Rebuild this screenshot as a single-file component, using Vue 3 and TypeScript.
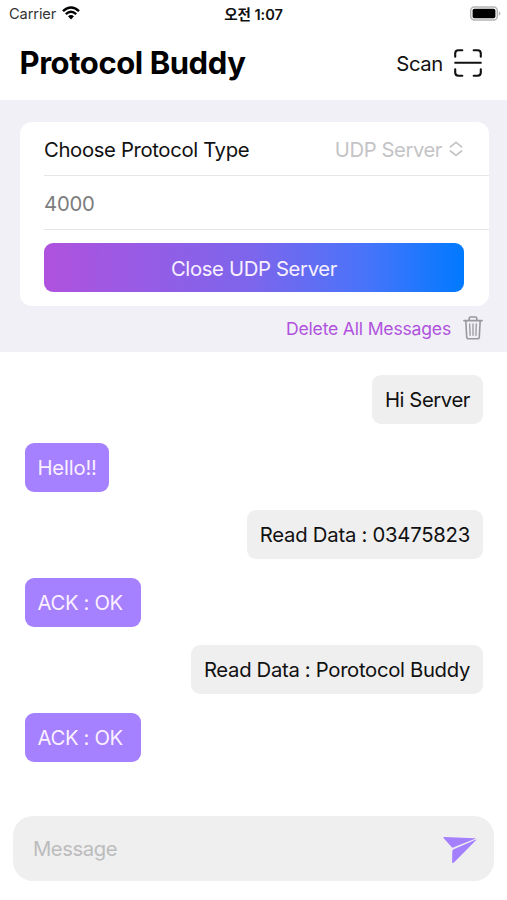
<script setup lang="ts">
import { ref } from 'vue'

interface ChatMessage {
  id: number
  text: string
  side: 'sent' | 'received'
  tracking?: number
}

const protocolType = ref('UDP Server')
const port = ref('')
const draft = ref('')
const messages = ref<ChatMessage[]>([
  { id: 1, text: 'Hi Server', side: 'sent', tracking: -0.43 },
  { id: 2, text: 'Hello!!', side: 'received', tracking: -0.2 },
  { id: 3, text: 'Read Data : 03475823', side: 'sent', tracking: -0.25 },
  { id: 4, text: 'ACK : OK ', side: 'received', tracking: -0.35 },
  { id: 5, text: 'Read Data : Porotocol Buddy', side: 'sent', tracking: -0.32 },
  { id: 6, text: 'ACK : OK ', side: 'received', tracking: -0.35 },
])

function clearMessages() {
  messages.value = []
}

function send() {
  const text = draft.value.trim()
  if (!text) return
  messages.value.push({ id: Date.now(), text, side: 'sent' })
  draft.value = ''
}
</script>

<template>
  <main class="screen">
    <div class="status">
      <div class="carrier">
        <span>Carrier</span>
        <svg class="wifi" viewBox="0 0 18 14" width="18" height="14">
          <path d="M1 5.1Q9-2.2 17 5.1" fill="none" stroke="#000" stroke-width="2.5" />
          <path d="M3.8 8.1Q9 3.4 14.2 8.1" fill="none" stroke="#000" stroke-width="2.3" />
          <path d="M6 10.3Q9 7.8 12 10.3L9 13.4Z" fill="#000" />
        </svg>
      </div>
      <time class="clock">오전 1:07</time>
      <svg class="battery" viewBox="0 0 32 15" width="32" height="15">
        <rect x="1.7" y="1" width="26.6" height="13" rx="3.8" fill="#fff" stroke="#b4b4b4" stroke-width="1.5" />
        <rect x="3.6" y="2.8" width="22.8" height="9.4" rx="1.8" fill="#000" />
        <path d="M29.8 5.3Q31.4 6 31.4 7.5T29.8 9.7Z" fill="#b4b4b4" />
      </svg>
    </div>

    <header class="header">
      <h1>Protocol Buddy</h1>
      <button class="scan">
        <span>Scan</span>
        <svg viewBox="0 0 28 28" width="28" height="28" fill="none" stroke="#111" stroke-width="2.1" stroke-linecap="round">
          <path d="M1.2 7.8V4.4Q1.2 1.2 4.4 1.2H8.3M19.7 1.2H23.6Q26.8 1.2 26.8 4.4V7.8M1.2 20.2V23.6Q1.2 26.8 4.4 26.8H8.3M19.7 26.8H23.6Q26.8 26.8 26.8 23.6V20.2M1.2 13.8H26.8" />
        </svg>
      </button>
    </header>

    <section class="settings">
      <div class="card">
        <div class="row">
          <span class="label">Choose Protocol Type</span>
          <button class="picker">
            <span>{{ protocolType }}</span>
            <svg viewBox="0 0 14 16" width="14" height="16" fill="none" stroke="#c4c4c6" stroke-width="1.7" stroke-linecap="round" stroke-linejoin="round">
              <path d="M1.4 5.8L7 1.4L12.6 5.8M1.4 10L7 14.4L12.6 10" />
            </svg>
          </button>
        </div>
        <div class="row">
          <input v-model="port" class="port" placeholder="4000" />
        </div>
        <button class="toggle">Close UDP Server</button>
      </div>
      <button class="delete" @click="clearMessages">
        <span>Delete All Messages</span>
        <svg viewBox="0 0 20 24" width="20" height="24" fill="none" stroke="#98989d" stroke-width="1.6" stroke-linecap="round" stroke-linejoin="round">
          <path d="M.9 4.6H19.1M6.2 4.4V2.5Q6.2 1 7.7 1H12.3Q13.8 1 13.8 2.5V4.4M2.8 4.8L3.7 21Q3.8 22.8 5.6 22.8H14.4Q16.2 22.8 16.3 21L17.2 4.8" />
          <path d="M6.7 8L7.1 19.3M10 8V19.3M13.3 8L12.9 19.3" stroke-width="1.3" />
        </svg>
      </button>
    </section>

    <section class="chat">
      <p
        v-for="m in messages"
        :key="m.id"
        class="bubble"
        :class="m.side"
        :style="{ letterSpacing: `${m.tracking ?? -0.3}px` }"
      >{{ m.text }}</p>
    </section>

    <form class="composer" @submit.prevent="send">
      <input v-model="draft" placeholder="Message" />
      <button class="send" aria-label="Send">
        <svg viewBox="0 0 34 27" width="34" height="27" fill="#a480ff">
          <path d="M.5.9Q.2 0 1.2 0L32.2 1.2Q33 1.3 32.2 1.7L10.2 10.6Q9.4 10.9 8.8 10.2Z" />
          <path d="M33 2.6Q33.6 2.3 33.2 3L11 25.6Q9.4 26.8 9.1 25L9.3 14.3Q9.3 12.9 10.7 12.2Z" />
        </svg>
      </button>
    </form>
  </main>
</template>

<style>
body {
  background: #fff;
}
</style>

<style scoped>
.screen {
  width: 507px;
  height: 900px;
  box-sizing: border-box;
  display: flex;
  flex-direction: column;
  overflow: hidden;
  background: #fff;
  color: #111;
  font-family: Inter, "Noto Sans CJK KR", sans-serif;
  font-size: 20.3px;
  letter-spacing: -0.35px;
}

button,
input {
  border: 0;
  padding: 0;
  margin: 0;
  background: none;
  font: inherit;
  letter-spacing: inherit;
  color: inherit;
  outline: none;
}

svg {
  display: block;
  flex: none;
}

.status {
  height: 27px;
  display: grid;
  grid-template-columns: 1fr auto 1fr;
  align-items: center;
  padding: 0 6px 0 9px;
  font-size: 14.6px;
  letter-spacing: 0;
}

.carrier {
  display: flex;
  align-items: center;
  gap: 6px;
  letter-spacing: -0.1px;
  color: #333;
}

.wifi {
  margin-top: -2px;
}

.clock {
  margin-right: 3px;
  font-size: 14.6px;
  font-weight: 600;
  letter-spacing: -0.1px;
}

.battery {
  justify-self: end;
}

.header {
  height: 73px;
  display: flex;
  align-items: center;
  justify-content: space-between;
  padding: 0 25px 0 19.5px;
  box-sizing: border-box;
}

h1 {
  margin: -2px 0 0;
  font-size: 31px;
  font-weight: 700;
  letter-spacing: -0.43px;
  color: #000;
}

.scan {
  display: flex;
  align-items: center;
  gap: 11px;
}

.scan svg {
  margin-top: -2px;
}

.settings {
  height: 252px;
  box-sizing: border-box;
  padding: 22px 18px 0 20px;
  background: #f0f0f6;
  display: flex;
  flex-direction: column;
}

.card {
  height: 184px;
  box-sizing: border-box;
  padding-left: 24px;
  border-radius: 12px;
  background: #fff;
}

.row {
  height: 54px;
  box-sizing: border-box;
  display: flex;
  align-items: center;
  justify-content: space-between;
  padding: 2px 26px 0 0;
  border-bottom: 1px solid #e6e6e8;
}

.picker {
  display: flex;
  align-items: center;
  gap: 7px;
  letter-spacing: -0.45px;
  color: #c4c4c6;
}

.picker svg {
  margin-top: -1px;
}

.port {
  width: 100%;
  letter-spacing: -0.2px;
}

.port::placeholder {
  color: #7c7c7e;
  opacity: 1;
}

.toggle {
  display: block;
  width: 420px;
  height: 49px;
  padding-top: 1px;
  margin-top: 13px;
  border-radius: 9px;
  background: linear-gradient(90deg, #af52de, #7c66ec 50%, #4774fa 77%, #007aff);
  color: #f8f0ff;
}

.delete {
  display: flex;
  align-items: center;
  align-self: flex-end;
  gap: 12px;
  height: 44px;
  margin-right: 6px;
  font-size: 17.6px;
  letter-spacing: -0.2px;
  color: #b052de;
}

.chat {
  flex: 1;
  display: flex;
  flex-direction: column;
  gap: 18.6px;
  padding: 23px 24.5px 0 25px;
}

.bubble {
  flex: none;
  margin: 0;
  height: 49px;
  line-height: 50px;
  padding: 0 12.5px;
  border-radius: 9px;
  white-space: pre;
}

.sent {
  align-self: flex-end;
  background: #efefef;
}

.received {
  align-self: flex-start;
  background: #a580ff;
  color: #fbf0ff;
}

.composer {
  flex: none;
  height: 65px;
  box-sizing: border-box;
  margin: 0 13px 19px;
  padding: 0 17.5px 0 20px;
  display: flex;
  align-items: center;
  justify-content: space-between;
  border-radius: 20px;
  background: #efefef;
}

.composer input {
  flex: 1;
  min-width: 0;
  letter-spacing: -0.45px;
}

.composer input::placeholder {
  color: #bcbcbd;
  opacity: 1;
}

.send {
  padding-top: 3px;
}
</style>
